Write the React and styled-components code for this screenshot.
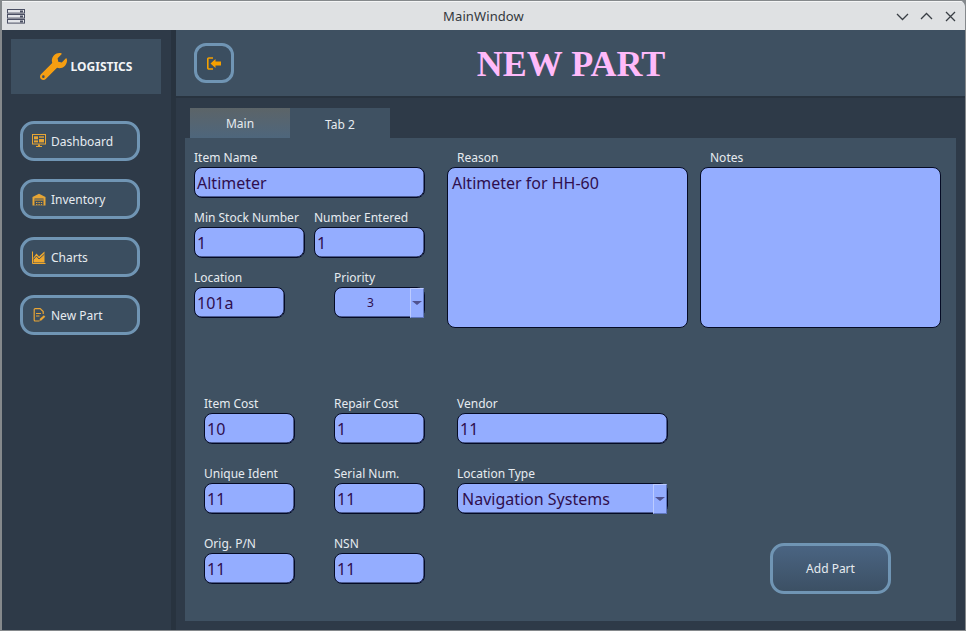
import React from 'react';
import styled, { createGlobalStyle } from 'styled-components';
import { FaWrench } from 'react-icons/fa';

const GlobalStyle = createGlobalStyle`
  html, body { margin: 0; padding: 0; height: 100%; background: #85898c; overflow: hidden; }
  #root { height: 100%; }
`;

const Window = styled.div`
  height: 629px;
  margin: 1px 1px 1px 2px;
  display: flex;
  flex-direction: column;
  font-family: "Noto Sans", sans-serif;
  background: #2e3a48;
  border-top-right-radius: 5px;
  overflow: hidden;
`;

const TitleBar = styled.div`
  height: 29px;
  flex: none;
  display: flex;
  align-items: center;
  justify-content: space-between;
  padding: 0 8px 0 5px;
  background: #dfe1e3;
  border-top: 1px solid #f4f5f6;
  box-sizing: border-box;
  position: relative;
`;

const TitleText = styled.div`
  position: absolute;
  left: 0;
  right: 0;
  text-align: center;
  font-size: 13px;
  letter-spacing: 0.1px;
  color: #33383d;
`;

const WinButtons = styled.div`
  display: flex;
  gap: 11px;
`;

const Body = styled.div`
  flex: 1;
  display: flex;
  min-height: 0;
`;

const Sidebar = styled.div`
  width: 174px;
  flex: none;
  box-sizing: border-box;
  padding: 9px 9px 0;
  background: #2e3a48;
  border-right: 5px solid #28333f;
`;

const LogoBox = styled.div`
  height: 55px;
  width: 150px;
  display: flex;
  align-items: center;
  justify-content: center;
  gap: 4px;
  background: #3d4f60;
  color: #f2f4f6;
  font-size: 12px;
  font-weight: 700;
`;

const Nav = styled.div`
  display: flex;
  flex-direction: column;
  gap: 18px;
  margin: 27px 0 0 9px;
`;

const NavButton = styled.div`
  width: 120px;
  height: 40px;
  box-sizing: border-box;
  display: flex;
  align-items: center;
  gap: 5px;
  padding-left: 9px;
  border: 3px solid #7095b4;
  border-radius: 14px;
  background: #3b4e60;
  color: #e6ebf0;
  font-size: 12px;
`;

const Main = styled.div`
  flex: 1;
  display: flex;
  flex-direction: column;
  min-width: 0;
`;

const Header = styled.div`
  height: 66px;
  flex: none;
  display: flex;
  align-items: center;
  padding-left: 18px;
  background: #3e5061;
  border-bottom: 2px solid #28333f;
  position: relative;
`;

const BackButton = styled.div`
  width: 40px;
  height: 40px;
  box-sizing: border-box;
  display: flex;
  align-items: center;
  justify-content: center;
  border: 3px solid #7095b4;
  border-radius: 12px;
  background: #3b4e60;
`;

const Heading = styled.h1`
  position: absolute;
  left: 0;
  width: 790px;
  margin: 2px 0 0;
  text-align: center;
  font-family: "Liberation Serif", serif;
  font-size: 36px;
  font-weight: 700;
  color: #ffbafa;
`;

const TabBar = styled.div`
  display: flex;
  margin: 10px 0 0 14px;
`;

const Tab = styled.div`
  width: 100px;
  height: 30px;
  display: flex;
  align-items: center;
  justify-content: center;
  padding: ${p => (p.$active ? '1px 0' : '2px 0 0')};
  box-sizing: border-box;
  font-size: 12px;
  color: #e6ebf0;
  background: ${p => (p.$active ? 'linear-gradient(#5c6468, #4e667c)' : '#3f5162')};
`;

const Panel = styled.div`
  width: 771px;
  height: 483px;
  margin-left: 9px;
  box-sizing: border-box;
  padding: 10px 0 0 9px;
  background: #3f5162;
`;

const TopSection = styled.div`
  display: flex;
`;

const LeftColumn = styled.div`
  width: 231px;
  margin-right: 22px;
  display: flex;
  flex-direction: column;
  gap: 10px;
`;

const FieldRow = styled.div`
  display: flex;
  justify-content: space-between;
`;

const Field = styled.div`
  width: ${p => p.$w}px;
  margin-right: ${p => p.$mr || 0}px;
`;

const Label = styled.div`
  height: 19px;
  line-height: 19px;
  padding-left: ${p => p.$indent || 0}px;
  font-size: 12px;
  color: #e6ebf0;
  white-space: nowrap;
`;

const TextBox = styled.div`
  height: 31px;
  box-sizing: border-box;
  display: flex;
  align-items: center;
  padding-left: 2px;
  border: 1px solid #050b24;
  border-radius: 8px;
  background: #94adff;
  color: #2f0f4e;
  font-size: 16px;
  position: relative;
  box-shadow: inset -0.5px -0.5px 0 #050b24;
`;

const TextArea = styled.div`
  height: 161px;
  box-sizing: border-box;
  padding: 3px 4px;
  border: 1px solid #050b24;
  border-radius: 8px;
  background: #94adff;
  color: #2f0f4e;
  font-size: 16px;
  line-height: 24px;
`;

const ComboValue = styled.span`
  flex: 1;
  padding-left: ${p => (p.$small ? '0' : '2px')};
  padding-right: ${p => (p.$small ? '20px' : '0')};
  text-align: ${p => (p.$small ? 'center' : 'left')};
  font-size: ${p => (p.$small ? '12px' : '16px')};
`;

const ComboArrow = styled.div`
  position: absolute;
  right: 0;
  top: 0;
  bottom: -1px;
  width: 14px;
  box-sizing: border-box;
  display: flex;
  align-items: center;
  justify-content: center;
  background: #94adff;
  border: 1px solid #bccbff;
  border-right-color: #5f76bd;
  border-bottom-color: #5f76bd;
  &::after {
    content: '';
    border-left: 5px solid transparent;
    border-right: 5px solid transparent;
    border-top: 4px solid #50528f;
  }
`;

const BottomSection = styled.div`
  display: grid;
  grid-template-columns: 130px 123px 313px 121px;
  row-gap: 20px;
  margin: 66px 0 0 10px;
`;

const AddButton = styled.div`
  grid-column: 4;
  grid-row: 3;
  align-self: start;
  margin-top: 9px;
  height: 51px;
  box-sizing: border-box;
  display: flex;
  align-items: center;
  justify-content: center;
  border: 3px solid #7095b4;
  border-radius: 14px;
  background: linear-gradient(#4a6482, #3c5064);
  color: #e6ebf0;
  font-size: 12px;
`;

const ServerIcon = () => (
  <svg width="18" height="15" viewBox="0 0 18 15">
    {[0, 5, 10].map(y => (
      <g key={y}>
        <rect x="0.5" y={y + 0.5} width="17" height="3.6" fill="#e4e6ea" stroke="#4a4f63" />
        <rect x="13" y={y + 1.5} width="3" height="2" fill="#4a4f63" />
      </g>
    ))}
  </svg>
);

const Chevron = ({ d }) => (
  <svg width="13" height="13" viewBox="0 0 13 13" fill="none" stroke="#3a3f45" strokeWidth="1.3">
    <path d={d} />
  </svg>
);

const DashboardIcon = () => (
  <svg width="14" height="14" viewBox="0 0 14 14">
    <rect x="0.5" y="0.5" width="13" height="9.5" fill="#3b4e60" stroke="#e6a535" />
    <rect x="2" y="2.3" width="4" height="3" fill="#e6a535" />
    <rect x="7" y="2.3" width="5" height="1.4" fill="#e6a535" />
    <rect x="7" y="5" width="5" height="3.4" fill="#e6a535" />
    <rect x="2" y="6.4" width="4" height="2" fill="#e6a535" />
    <path d="M6 10.5h2v1.5h2V13H4v-1h2z" fill="#e6a535" />
  </svg>
);

const InventoryIcon = () => (
  <svg width="14" height="13" viewBox="0 0 14 13">
    <path d="M0.5 12.5V4L7 0.8 13.5 4v8.5" fill="#e6a535" />
    <rect x="2.5" y="5.5" width="9" height="7" fill="#3b4e60" />
    <path d="M2.5 7h9M4 9.5h1.4M6.4 9.5h1.4M8.8 9.5h1.4M4 11.6h1.4M6.4 11.6h1.4M8.8 11.6h1.4" stroke="#e6a535" strokeWidth="1" />
  </svg>
);

const ChartsIcon = () => (
  <svg width="14" height="13" viewBox="0 0 14 13">
    <path d="M0.5 0.5V12.5H13.5" fill="none" stroke="#f0a82c" />
    <path d="M1.5 11.5V6.5L4.5 2.5 7 5.5 12.5 0.5V11.5z" fill="#f0a82c" />
    <path d="M1.5 8.5L4.5 5 7 8 12.5 3" fill="none" stroke="#3b4e60" strokeWidth="0.9" />
  </svg>
);

const NewPartIcon = () => (
  <svg width="14" height="14" viewBox="0 0 14 14" fill="none" stroke="#e9a535" strokeWidth="1.2">
    <path d="M7.5 13H3.2a1 1 0 0 1-1-1V1.6a1 1 0 0 1 1-1h5l3 3V6" />
    <path d="M4 5.5h5M4 8h3.5" />
    <path d="M7.5 12.8l.4-2 4-3.6 1.4 1.6-4 3.6z" fill="#e9a535" stroke="none" />
  </svg>
);

const BackIcon = () => (
  <svg width="15" height="13" viewBox="0 0 15 13">
    <path d="M6 1H1.8A1 1 0 0 0 .8 2v9a1 1 0 0 0 1 1H6" fill="none" stroke="#f5a000" strokeWidth="1.6" />
    <path d="M3.5 6.5L8.5 2v2.6h5.5v3.8H8.5V11z" fill="#f5a000" />
  </svg>
);

const navItems = [
  { label: 'Dashboard', icon: <DashboardIcon /> },
  { label: 'Inventory', icon: <InventoryIcon /> },
  { label: 'Charts', icon: <ChartsIcon /> },
  { label: 'New Part', icon: <NewPartIcon /> },
];

function App() {
  return (
    <>
      <GlobalStyle />
      <Window>
        <TitleBar>
          <ServerIcon />
          <TitleText>MainWindow</TitleText>
          <WinButtons>
            <Chevron d="M1 4l5.5 5.5L12 4" />
            <Chevron d="M1 9l5.5-5.5L12 9" />
            <Chevron d="M2 2l9 9M11 2l-9 9" />
          </WinButtons>
        </TitleBar>
        <Body>
          <Sidebar>
            <LogoBox>
              <FaWrench size={27} color="#f59e12" />
              LOGISTICS
            </LogoBox>
            <Nav>
              {navItems.map(item => (
                <NavButton key={item.label}>
                  {item.icon}
                  {item.label}
                </NavButton>
              ))}
            </Nav>
          </Sidebar>
          <Main>
            <Header>
              <BackButton><BackIcon /></BackButton>
              <Heading>NEW PART</Heading>
            </Header>
            <TabBar>
              <Tab $active>Main</Tab>
              <Tab>Tab 2</Tab>
            </TabBar>
            <Panel>
              <TopSection>
                <LeftColumn>
                  <Field $w={231}>
                    <Label>Item Name</Label>
                    <TextBox>Altimeter</TextBox>
                  </Field>
                  <FieldRow>
                    <Field $w={111}>
                      <Label>Min Stock Number</Label>
                      <TextBox>1</TextBox>
                    </Field>
                    <Field $w={111}>
                      <Label>Number Entered</Label>
                      <TextBox>1</TextBox>
                    </Field>
                  </FieldRow>
                  <FieldRow>
                    <Field $w={91}>
                      <Label>Location</Label>
                      <TextBox>101a</TextBox>
                    </Field>
                    <Field $w={91}>
                      <Label>Priority</Label>
                      <TextBox>
                        <ComboValue $small>3</ComboValue>
                        <ComboArrow />
                      </TextBox>
                    </Field>
                  </FieldRow>
                </LeftColumn>
                <Field $w={241} $mr={12}>
                  <Label $indent={10}>Reason</Label>
                  <TextArea>Altimeter for HH-60</TextArea>
                </Field>
                <Field $w={241}>
                  <Label $indent={10}>Notes</Label>
                  <TextArea />
                </Field>
              </TopSection>
              <BottomSection>
                <Field $w={91}><Label>Item Cost</Label><TextBox>10</TextBox></Field>
                <Field $w={91}><Label>Repair Cost</Label><TextBox>1</TextBox></Field>
                <Field $w={211}><Label>Vendor</Label><TextBox>11</TextBox></Field>
                <span />
                <Field $w={91}><Label>Unique Ident</Label><TextBox>11</TextBox></Field>
                <Field $w={91}><Label>Serial Num.</Label><TextBox>11</TextBox></Field>
                <Field $w={211}>
                  <Label>Location Type</Label>
                  <TextBox>
                    <ComboValue>Navigation Systems</ComboValue>
                    <ComboArrow />
                  </TextBox>
                </Field>
                <span />
                <Field $w={91}><Label>Orig. P/N</Label><TextBox>11</TextBox></Field>
                <Field $w={91}><Label>NSN</Label><TextBox>11</TextBox></Field>
                <AddButton>Add Part</AddButton>
              </BottomSection>
            </Panel>
          </Main>
        </Body>
      </Window>
    </>
  );
}

export default App;
